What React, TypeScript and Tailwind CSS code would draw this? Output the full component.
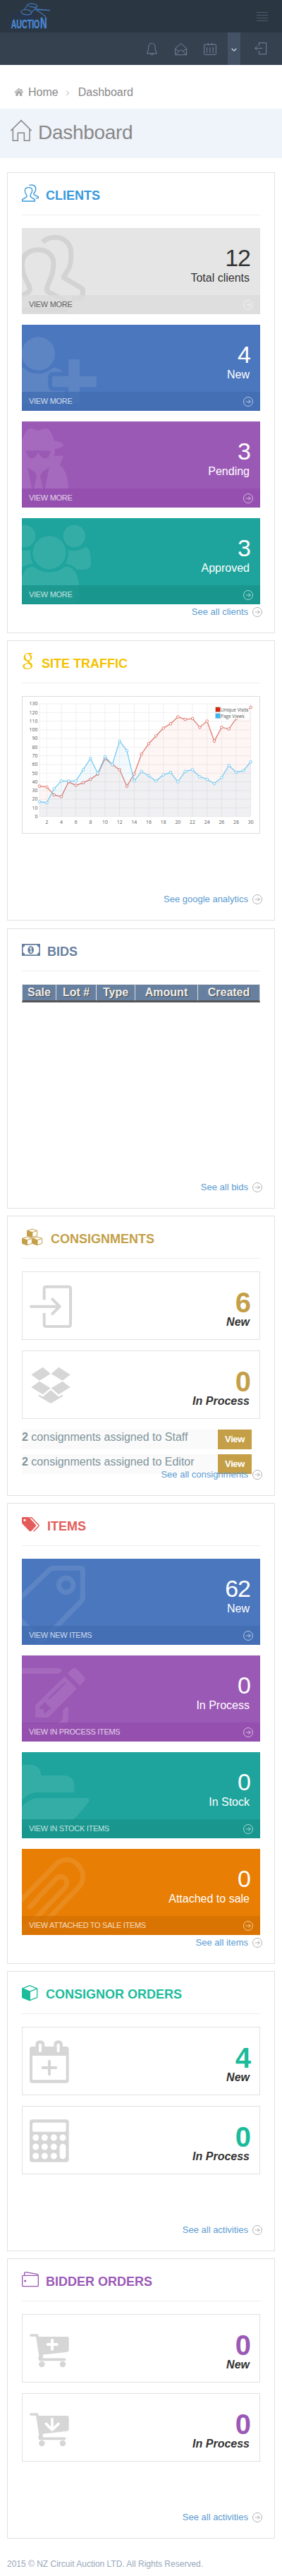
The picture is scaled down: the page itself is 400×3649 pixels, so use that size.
import React from "react";

type IconProps = { box: string; className?: string; children: React.ReactNode };

function Icon({ box, className = "", children }: IconProps) {
  return (
    <svg viewBox={box} className={`shrink-0 ${className}`} fill="none" stroke="currentColor" aria-hidden="true">
      {children}
    </svg>
  );
}

function CircleArrow({ className = "" }: { className?: string }) {
  return (
    <Icon box="0 0 42 42" className={`size-3.5 ${className}`}>
      <circle cx="21" cy="21" r="19.5" strokeWidth="2.6" />
      <path d="M11 21H31M22 13l9 8-9 8" strokeWidth="2.6" />
    </Icon>
  );
}

/* ---------- large tile artwork ---------- */

const art: Record<string, { box: string; node: React.ReactNode }> = {
  clients: {
    box: "93 39 339 366",
    node: (
      <g strokeWidth="21" strokeLinejoin="round">
        <path d="M95 200V185C95 155 125 131 163 131S228 155 228 190C228 250 199 275 199 300Q199 307 206 311L272 345Q280 350 280 358V380Q280 388 272 388H60V350L120 311Q127 307 127 300C127 275 95 250 95 200" />
        <path d="M181 98Q203 79 235 79C275 79 302 110 302 140V165C302 220 271 235 271 250L345 293Q352 297 352 304V328Q352 337 343 337H305" />
      </g>
    ),
  },
  userPlus: {
    box: "93 450 339 366",
    node: (
      <g fill="currentColor" stroke="none">
        <circle cx="163" cy="573" r="71" />
        <path d="M93 632Q100 633 107 639C122 652 140 658 163 658S205 650 221 636Q228 632 236 632Q255 636 268 650H230Q204 650 204 676V706Q204 732 230 732H275V780Q270 786 260 786H93Z" />
        <path d="M300 597H331Q339 597 339 605V668H403Q411 668 411 676V707Q411 715 403 715H339V779Q339 787 331 787H300Q292 787 292 779V715H230Q222 715 222 707V676Q222 668 230 668H292V605Q292 597 300 597Z" />
      </g>
    ),
  },
  secret: {
    box: "93 21 339 366",
    node: (
      <path
        fill="currentColor"
        stroke="none"
        fillRule="evenodd"
        d="M93 105C105 72 113 51 130 51C145 51 150 59 163 59S180 51 195 51C213 51 222 75 230 102C250 105 269 112 269 121S250 137 233 138C234 150 232 160 229 167H270L254 208C280 225 291 265 291 310V356H93V160H96L93 152ZM110 146Q163 142 216 146V152L212 156C210 170 205 178 192 178C178 178 172 170 167 159Q163 153 159 159C154 170 148 178 136 178C122 178 116 170 114 156L110 152ZM116 214Q131 228 143 231L157 251L140 328ZM210 214Q195 228 184 231L170 251L187 328Z"
      />
    ),
  },
  users: {
    box: "93 432 339 366",
    node: (
      <g fill="currentColor" stroke="none">
        <circle cx="104" cy="508" r="47" />
        <circle cx="316" cy="508" r="47" />
        <circle cx="210" cy="578" r="70.5" />
        <path d="M291 567Q330 578 361 556C381 552 387 585 387 625Q387 650 358 650H326Q312 630 280 626Q293 600 291 567Z" />
        <path d="M129 567Q112 571 93 569V642Q110 628 140 626Q127 600 129 567Z" />
        <path d="M93 690C98 662 112 636 142 638Q172 662 210 662T278 638C325 636 338 690 338 750Q338 792 300 792H120Q102 792 93 782Z" />
      </g>
    ),
  },
  tag: {
    box: "93 264 339 366",
    node: (
      <g strokeWidth="21" strokeLinejoin="round">
        <path d="M75 442L213 309Q219 304 226 304H342Q352 304 352 314V432Q352 438 347 443L185 609Q178 614 171 609L75 513" />
        <circle cx="281" cy="376" r="30.5" />
      </g>
    ),
  },
  edit: {
    box: "93 675 339 366",
    node: (
      <g fill="currentColor" stroke="none">
        <path d="M93 728H238Q258 729 265 739L250 752H93Z" />
        <path
          fillRule="evenodd"
          d="M275 764L327 816L205 939H151V886ZM190 873L168 894V904H186V920L190 922L218 900ZM274 789L206 855Q204 862 211 861L279 795Q279 789 274 789Z"
        />
        <path d="M288 751L306 733Q316 725 326 733L356 763Q366 773 358 784L340 803Z" />
        <path d="M268 909Q275 895 291 893V930Q291 988 235 988H93V965H235Q268 960 268 925Z" />
      </g>
    ),
  },
  folder: {
    box: "93 66 339 366",
    node: (
      <g fill="currentColor" stroke="none">
        <path d="M93 120H134Q174 124 174 165H272Q316 167 316 210V237H160Q122 237 93 270Z" />
        <path d="M93 298Q125 261 165 261H369Q382 263 378 275Q360 303 315 350Q290 377 250 377H93Z" />
      </g>
    ),
  },
  clip: {
    box: "93 477 339 366",
    node: (
      <g strokeWidth="21" strokeLinecap="round">
        <path d="M70 715L235 546C262 516 303 515 330 544C360 572 360 612 333 642L195 785" />
        <path d="M127 724L235 607C250 590 270 592 280 606C288 620 284 634 275 643L130 795Q112 815 85 821" />
      </g>
    ),
  },
};

type Tile = { art: string; value: string; label: string; more: string; tone: string; bar: string };

const clientTiles: Tile[] = [
  { art: "clients", value: "12", label: "Total clients", more: "View more", tone: "bg-[#e5e5e5] text-[#333333]", bar: "bg-[#dcdcdc]/80" },
  { art: "userPlus", value: "4", label: "New", more: "View more", tone: "bg-[#4b77be] text-white", bar: "bg-[#426db3]/80" },
  { art: "secret", value: "3", label: "Pending", more: "View more", tone: "bg-[#9b59b6] text-white", bar: "bg-[#934cae]/80" },
  { art: "users", value: "3", label: "Approved", more: "View more", tone: "bg-[#1ea49d] text-white", bar: "bg-[#18938c]/80" },
];

const itemTiles: Tile[] = [
  { art: "tag", value: "62", label: "New", more: "View new items", tone: "bg-[#4b77be] text-white", bar: "bg-[#426db3]/80" },
  { art: "edit", value: "0", label: "In Process", more: "View in process items", tone: "bg-[#9b59b6] text-white", bar: "bg-[#934cae]/80" },
  { art: "folder", value: "0", label: "In Stock", more: "View in stock items", tone: "bg-[#1ea49d] text-white", bar: "bg-[#18938c]/80" },
  { art: "clip", value: "0", label: "Attached to sale", more: "View attached to sale items", tone: "bg-[#e87e04] text-white", bar: "bg-[#d57203]/80" },
];

function StatTile({ tile }: { tile: Tile }) {
  const { box, node } = art[tile.art];
  const light = tile.art === "clients";
  return (
    <a className={`relative flex h-[122px] flex-col overflow-hidden ${tile.tone}`}>
      <Icon
        box={box}
        className={`absolute top-0 left-0 h-[122px] w-[113px] ${light ? "text-[#d3d3d3]" : "text-white opacity-10"}`}
      >
        {node}
      </Icon>
      <div className="flex h-[95px] flex-col items-end pt-[25px] pr-[15px]">
        <div className="-mr-px text-[34px] leading-[34px] tracking-[-1px]">{tile.value}</div>
        <div className="mt-1 text-base leading-4">{tile.label}</div>
      </div>
      <div className={`relative flex h-[27px] items-center justify-between px-2.5 ${tile.bar}`}>
        <span className={`text-[11px] tracking-[-0.3px] uppercase ${light ? "text-[#5f5f5f]" : "text-white/75"}`}>{tile.more}</span>
        <CircleArrow className="text-white/70" />
      </div>
    </a>
  );
}

/* ---------- outlined stat boxes ---------- */

const cart = (
  <>
    <path d="M132 354H158L172 445Q166 449 170 457H275" strokeWidth="11" strokeLinecap="round" strokeLinejoin="round" />
    <path d="M156 360H287Q293 360 293 367V418Q293 424 286 425L180 437L172 442Z" fill="currentColor" stroke="none" />
    <path d="M177 430V457" strokeWidth="11" />
    <circle cx="178" cy="477" r="13" fill="currentColor" stroke="none" />
    <circle cx="267" cy="477" r="13" fill="currentColor" stroke="none" />
  </>
);

const boxArt: Record<string, { box: string; node: React.ReactNode }> = {
  login: {
    box: "96 306 240 285",
    node: (
      <g strokeWidth="12">
        <path d="M188 424V376Q188 368 196 368H292Q300 368 300 376V529Q300 537 292 537H196Q188 537 188 529V480" />
        <path d="M132 452H252M223 421L254 452L223 483" strokeLinecap="round" strokeLinejoin="round" />
      </g>
    ),
  },
  dropbox: {
    box: "96 642 240 285",
    node: (
      <path
        fill="currentColor"
        stroke="none"
        d="M182 710L215 738L168 767L133 742ZM250 710L299 742L266 767L218 738ZM168 770L215 799L182 826L133 795ZM266 770L299 795L250 826L218 799ZM166 826L182 836L216 807L250 836L266 826V835L216 864L166 835Z"
      />
    ),
  },
  calendar: {
    box: "96 276 240 285",
    node: (
      <g fill="currentColor" stroke="none">
        <path
          fillRule="evenodd"
          d="M138 357H151V350Q151 331 170.500 331T190 350V357H229V350Q229 331 248 331T267 350V357H281Q293 357 293 369V500Q293 512 281 512H138Q126 512 126 500V369Q126 357 138 357ZM138 396V499H281V396ZM165 349V377Q165 381 171 381T177 377V349Q177 345 171 345T165 349ZM242 349V377Q242 381 248 381T254 377V349Q254 345 248 345T242 349Z"
        />
        <path d="M182 447H238M210 420V475" stroke="currentColor" strokeWidth="12" strokeLinecap="round" />
      </g>
    ),
  },
  calculator: {
    box: "96 612 240 285",
    node: (
      <g stroke="none">
        <rect x="126" y="667" width="167" height="181" rx="12" fill="currentColor" />
        <rect x="138" y="680" width="143" height="39" rx="6" fill="#fff" />
        <g fill="#fff">
          {[152, 190, 229].map((x) => [744, 783, 822].map((y) => <circle key={`${x}-${y}`} cx={x} cy={y} r="13.500" />))}
          <circle cx="267" cy="744" r="13.500" />
          <rect x="254" y="770" width="26" height="65" rx="13" />
        </g>
      </g>
    ),
  },
  cartPlus: {
    box: "96 267 240 285",
    node: (
      <>
        {cart}
        <path d="M203 393H242M222 374V413" stroke="#fff" strokeWidth="12" strokeLinecap="round" />
      </>
    ),
  },
  cartDown: {
    box: "96 267 240 285",
    node: (
      <>
        {cart}
        <path d="M222 374V418M196 394L222 420L249 394" stroke="#fff" strokeWidth="11" strokeLinecap="round" strokeLinejoin="round" />
      </>
    ),
  },
};

function StatBox({ icon, value, label, tone }: { icon: string; value: string; label: string; tone: string }) {
  const { box, node } = boxArt[icon];
  return (
    <div className="flex h-[97px] justify-between border border-[#e1e1e1]">
      <Icon box={box} className="h-[95px] w-20 text-[#d6d6d6]">
        {node}
      </Icon>
      <div className="flex flex-col items-end pt-[23px] pr-3.5 font-bold">
        <div className={`-mr-px text-[40px] leading-10 tracking-[-1px] ${tone}`}>{value}</div>
        <div className="text-base leading-4 text-[#333333] italic">{label}</div>
      </div>
    </div>
  );
}

/* ---------- card shell ---------- */

type CardProps = {
  title: string;
  tone: string;
  icon: React.ReactNode;
  iconBox: string;
  iconWidth: string;
  size: string;
  link: string;
  children: React.ReactNode;
};

function Card({ title, tone, icon, iconBox, iconWidth, size, link, children }: CardProps) {
  return (
    <section className={`flex flex-col border border-[#e1e1e1] px-5 ${size}`}>
      <header className={`flex h-[60px] shrink-0 border-b border-[#eeeeee] ${tone}`}>
        <Icon box={iconBox} className={`h-[59px] ${iconWidth}`}>
          {icon}
        </Icon>
        <h2 className="pt-[23px] text-lg leading-[18px] font-bold whitespace-nowrap uppercase">{title}</h2>
      </header>
      <div className="mt-[18px] flex flex-col gap-[15px]">{children}</div>
      <a className="relative mt-auto -mr-[3px] mb-[21px] flex h-4 shrink-0 items-center justify-end gap-1.5 text-[13px] text-[#5b9bd1]">
        {link}
        <CircleArrow className="text-[#a6a6a6]" />
      </a>
    </section>
  );
}

/* ---------- traffic chart ---------- */

const visits = [35, 34, 25, 23, 40, 36, 39, 43, 49, 67, 60, 54, 35, 49, 72, 84, 93, 102, 107, 115, 112, 113, 103, 110, 87, 103, 101, 113, 119, 126];
const views = [17, 16, 32, 41, 41, 41, 54, 67, 50, 69, 60, 87, 76, 41, 52, 47, 41, 48, 51, 40, 52, 54, 46, 43, 38, 45, 59, 51, 53, 63];
const px = (day: number) => 168 + (day - 1) * 31;
const py = (v: number) => 770 - v * 3.685;
const line = (data: number[]) => data.map((v, i) => `${px(i + 1)},${py(v)}`).join(" ");

function Series({ data, stroke, fill }: { data: number[]; stroke: string; fill: string }) {
  return (
    <g>
      <polygon points={`168,770 ${line(data)} 1067,770`} fill={fill} stroke="none" />
      <polyline points={line(data)} fill="none" stroke={stroke} strokeWidth="4" />
      {data.map((v, i) => (
        <circle key={i} cx={px(i + 1)} cy={py(v)} r="5.500" fill="#fff" stroke={stroke} strokeWidth="3" />
      ))}
    </g>
  );
}

function TrafficChart() {
  const ticks = Array.from({ length: 14 }, (_, i) => i * 10);
  const days = Array.from({ length: 15 }, (_, i) => (i + 1) * 2);
  return (
    <div className="h-[195px] border border-[#dddddd]">
      <svg viewBox="96 261 1008 579" className="h-[193px] w-[336px]" fontFamily="'Open Sans', 'Noto Sans', sans-serif" fontSize="20.5">
        <g stroke="#f0f0f0" strokeWidth="3">
          {ticks.map((t) => (
            <line key={t} x1="168" x2="1067" y1={py(t)} y2={py(t)} />
          ))}
          {days.map((d) => (
            <line key={d} x1={px(d)} x2={px(d)} y1="291" y2="772" />
          ))}
          <line x1="168" x2="168" y1="291" y2="772" />
        </g>
        <g fill="#555">
          {ticks.map((t) => (
            <text key={t} x="160" y={py(t) + 7} textAnchor="end">
              {t}
            </text>
          ))}
          {days.map((d) => (
            <text key={d} x={px(d)} y="800" textAnchor="middle">
              {d}
            </text>
          ))}
        </g>
        <Series data={visits} stroke="#e07b70" fill="rgba(215,70,50,0.05)" />
        <Series data={views} stroke="#7acbf0" fill="rgba(70,175,230,0.07)" />
        <rect x="915" y="303" width="145" height="53" fill="#fff" opacity="0.85" />
        <rect x="917" y="305" width="21" height="21" fill="#d12610" stroke="#ccc" strokeWidth="2" />
        <rect x="917" y="332" width="21" height="21" fill="#37b7f3" stroke="#ccc" strokeWidth="2" />
        <g fill="#555">
          <text x="939" y="323" textLength="118" lengthAdjust="spacingAndGlyphs">Unique Visits</text>
          <text x="939" y="350" textLength="101" lengthAdjust="spacingAndGlyphs">Page Views</text>
        </g>
      </svg>
    </div>
  );
}

/* A small isometric box: solid left face, open top and right faces. */
function Cube({ x, y, w, h, sw }: { x: number; y: number; w: number; h: number; sw: number }) {
  const m = x + w / 2;
  const a = h * 0.2;
  const pts = `${m},${y} ${x + w},${y + a} ${x + w},${y + h - a} ${m},${y + h} ${x},${y + h - a} ${x},${y + a}`;
  return (
    <g strokeWidth={sw} strokeLinejoin="round">
      <polygon points={pts} fill="#fff" />
      <path d={`M${x} ${y + a}L${m} ${y + 2 * a}L${x + w} ${y + a}M${m} ${y + 2 * a}V${y + h}`} />
      <polygon points={`${x},${y + a} ${m},${y + 2 * a} ${m},${y + h} ${x},${y + h - a}`} fill="currentColor" />
    </g>
  );
}

function TopBar() {
  return (
    <>
      <div className="flex h-[46px] items-start justify-between bg-[#2b3643] pr-5 pl-[15px]">
        <svg viewBox="45 0 180 138" className="h-[46px] w-[60px] overflow-visible" fill="none" stroke="#4377b5" strokeWidth="3.5" strokeLinejoin="round">
          <text x="50" y="81" fontSize="36" fontStyle="italic" fontFamily="'Liberation Serif', serif" fill="#1f3565" stroke="none" textLength="100" lengthAdjust="spacingAndGlyphs">
            Circuit
          </text>
          <path d="M116 21L104 42C96 42 90 46 90 51C91 59 108 64 122 62C130 61 134 58 134 53L148 38" />
          <path d="M104 42C113 38 130 43 134 53" />
          <path d="M116 21C118 15 133 14 145 17C155 19 161 24 157 29C153 33 142 31 134 29S117 26 116 21" />
          <path d="M157 29L148 38M148 38L212 44L150 41M148 38C165 52 180 56 195 72" />
          <g fill="#4a86d0" stroke="#4a86d0" strokeWidth="1.5" fontWeight="bold" fontFamily="'Liberation Sans Narrow', 'Liberation Sans', sans-serif">
            <text x="47" y="120" fontSize="50" textLength="122" lengthAdjust="spacingAndGlyphs">AUCTIO</text>
            <text x="171" y="120" fontSize="67" textLength="29" lengthAdjust="spacingAndGlyphs">N</text>
          </g>
        </svg>
        <div className="mt-[17px] flex w-4 flex-col gap-[3px]">
          <span className="h-px bg-[#4e5d6f]" />
          <span className="h-px bg-[#4e5d6f]" />
          <span className="h-px bg-[#4e5d6f]" />
          <span className="h-px bg-[#4e5d6f]" />
        </div>
      </div>
      <nav className="flex h-[46px] items-center justify-end bg-[#364150] pr-5 text-[#74829a]">
        <Icon box="618 183 60 60" className="mr-[21px] size-5">
          <path d="M646 190C635 190 632 199 632 208C632 219 629 226 625 233H668C663 226 660 219 660 208C660 199 657 190 646 190ZM639 235Q641 239 646 239T654 235" strokeWidth="3" strokeLinejoin="round" />
        </Icon>
        <Icon box="741 183 60 60" className="mr-[21px] size-5">
          <path d="M770 191L746 212V239H794V212ZM746 214L762 224M794 214L777 224M747 238L762 224L770 217L778 224L793 238" strokeWidth="3" strokeLinejoin="round" />
        </Icon>
        <Icon box="864 183 60 60" className="mr-[15px] size-5">
          <rect x="869" y="195" width="50" height="43" rx="2" strokeWidth="3" />
          <path d="M886 189V199M902 189V199" strokeWidth="3" />
          <path d="M878 211H883M891 211H896M904 211H909M878 219H883M891 219H896M904 219H909M878 227H883M891 227H896M904 227H909" strokeWidth="5" />
        </Icon>
        <span className="mr-[19px] flex h-[46px] w-[18px] items-center justify-center bg-[#435265] pt-[3px] text-[#c6cfda]">
          <Icon box="0 0 24 15" className="h-[5px] w-2">
            <path d="M2 2L12 12L22 2" strokeWidth="4" />
          </Icon>
        </span>
        <Icon box="1080 183 60 60" className="size-5">
          <path d="M1102 201V188H1133V236H1102V222M1117 211H1086M1094 203L1085 211L1094 220" strokeWidth="3" />
        </Icon>
      </nav>
    </>
  );
}

const columns = [
  ["Sale", "w-12"],
  ["Lot #", "w-[57px]"],
  ["Type", "w-[55px]"],
  ["Amount", "w-[89px]"],
  ["Created", "w-[87px]"],
];

export default function App() {
  return (
    <div className="h-[3649px] w-[400px] overflow-hidden bg-white font-['Liberation_Sans',Arial,sans-serif] text-[#333333]">
      <TopBar />

      <div className="flex h-[62px] items-center pt-[15px] pl-5 text-base text-[#888888]">
        <Icon box="60 372 42 42" className="mr-[6px] size-3.5 text-[#aaaaaa]">
          <path d="M62 393L80 377L99 393" strokeWidth="4" />
          <path d="M67 394L80 383L94 394V408H84V398H77V408H67ZM89 378H94V386L89 382Z" fill="currentColor" stroke="none" />
        </Icon>
        <span>Home</span>
        <Icon box="0 0 18 24" className="mt-0.5 mr-3 ml-[10px] h-2 w-[6px] text-[#aaaaaa]">
          <path d="M4 2L14 12L4 22" strokeWidth="3" />
        </Icon>
        <span>Dashboard</span>
      </div>

      <div className="flex h-[70px] bg-[#eff3fa] pl-[15px] text-[#888888]">
        <Icon box="45 462 90 210" className="h-[70px] w-[30px]">
          <path d="M46 556L90 512L134 556M55 549V598H76V565H103V598H126V549" strokeWidth="4.500" />
        </Icon>
        <h1 className="pt-5 pl-[9px] text-[28px] leading-[28px] tracking-[-0.3px]">Dashboard</h1>
      </div>

      <main className="flex flex-col gap-2.5 px-2.5 pt-5">
        <Card
          title="Clients"
          tone="text-[#3598dc]"
          size="h-[653px]"
          link="See all clients"
          iconBox="93 735 102 177"
          iconWidth="w-[34px]"
          icon={
            <g strokeWidth="4" strokeLinejoin="round">
              <path d="M95 855H148V848L132 838Q126 833 130 827C135 821 137 815 137 808C137 800 130 797 121 797S106 800 106 810C106 818 108 822 112 827Q117 833 111 838L95 848Z" />
              <path d="M124 788C132 784 150 785 152 799C153 808 150 815 145 820Q141 826 147 829L163 836V842H152" />
            </g>
          }
        >
          {clientTiles.map((t) => (
            <StatTile key={t.art} tile={t} />
          ))}
        </Card>

        <Card
          title="Site Traffic"
          tone="text-[#f3c200]"
          size="h-[397px]"
          link="See google analytics"
          iconBox="93 24 84 177"
          iconWidth="w-7"
          icon={
            <g>
              <path
                fill="currentColor"
                stroke="none"
                fillRule="evenodd"
                d="M118 75H140L133 80H127C134 84 136 89 136 94C136 101 132 104 128 107C124 110 124 112 128 115C134 119 138 123 138 129C138 138 129 144 116 144C104 144 97 139 97 132C97 124 106 119 119 118C116 115 116 112 117 109C107 110 101 103 101 95C101 84 109 75 118 75ZM116 78C110 78 108 82 108 88C108 97 113 106 120 106C127 106 129 102 129 97C129 88 124 78 116 78ZM121 121C110 121 104 125 104 131C104 137 110 141 119 141C127 141 131 137 131 132C131 127 127 124 121 121Z"
              />
            </g>
          }
        >
          <TrafficChart />
        </Card>

        <Card
          title="Bids"
          tone="text-[#67809f]"
          size="mt-px h-[397px]"
          link="See all bids"
          iconBox="93 48 108 177"
          iconWidth="w-9"
          icon={
            <g fill="currentColor" stroke="none">
              <path fillRule="evenodd" d="M93 111H171V162H93ZM106 116Q106 123 98 125V148Q106 150 106 157H158Q158 150 166 148V125Q158 123 158 116Z" />
              <ellipse cx="131" cy="137" rx="13" ry="17" />
              <path d="M126 130L132 127V145M126 146H138" stroke="#fff" strokeWidth="4" />
            </g>
          }
        >
          <div className="flex border-x border-t border-b-[3px] border-[#dddddd] border-b-[#555555] bg-[#67809f]">
            {columns.map(([name, width], i) => (
              <div
                key={name}
                className={`h-[22px] shrink-0 text-center leading-[22px] font-bold text-[#eeeeee] [text-shadow:1px_1px_1px_#444] ${width} ${i < 4 ? "border-r border-[#dddddd]" : ""}`}
              >
                {name}
              </div>
            ))}
          </div>
        </Card>

        <Card
          title="Consignments"
          tone="text-[#c49f47]"
          size="h-[397px]"
          link="See all consignments"
          iconBox="93 69 123 177"
          iconWidth="w-[41px]"
          icon={
            <>
              <Cube x={116} y={123} w={42} h={35} sw={3} />
              <Cube x={95} y={156} w={41} h={35} sw={3} />
              <Cube x={138} y={156} w={41} h={35} sw={3} />
            </>
          }
        >
          <StatBox icon="login" value="6" label="New" tone="text-[#c49f47]" />
          <StatBox icon="dropbox" value="0" label="In Process" tone="text-[#c49f47]" />
          <div className="flex h-14 w-[326px] flex-col gap-[7px] text-[#80949a]">
            {["Staff", "Editor"].map((who) => (
              <div key={who} className="flex h-7 shrink-0 justify-between bg-[#fafafa]">
                <span className="leading-[21px]">
                  <b>2</b> consignments assigned to {who}
                </span>
                <span className="w-12 bg-[#c49f47] text-center text-[13px] leading-[27px] font-bold tracking-[-0.4px] text-white">View</span>
              </div>
            ))}
          </div>
        </Card>

        <Card
          title="Items"
          tone="text-[#e35b5a]"
          size="h-[653px]"
          link="See all items"
          iconBox="93 30 108 177"
          iconWidth="w-9"
          icon={
            <>
              <path fill="currentColor" stroke="none" fillRule="evenodd" d="M97 87H118Q122 87 126 91L152 119Q156 123 152 127L133 146Q129 150 125 146L97 118Q93 114 93 109V91Q93 87 97 87ZM105 95A5 5 0 1 0 105 105A5 5 0 1 0 105 95Z" />
              <path d="M125 89H130Q134 89 137 92L164 120Q167 123 164 126L143 148" strokeWidth="4.500" />
            </>
          }
        >
          {itemTiles.map((t) => (
            <StatTile key={t.art} tile={t} />
          ))}
        </Card>

        <Card
          title="Consignor orders"
          tone="text-[#1bbc9b]"
          size="h-[397px]"
          link="See all activities"
          iconBox="93 39 102 177"
          iconWidth="w-[34px]"
          icon={<Cube x={95} y={98} w={63} h={63} sw={4} />}
        >
          <StatBox icon="calendar" value="4" label="New" tone="text-[#1bbc9b]" />
          <StatBox icon="calculator" value="0" label="In Process" tone="text-[#1bbc9b]" />
        </Card>

        <Card
          title="Bidder orders"
          tone="text-[#9b59b6]"
          size="h-[397px]"
          link="See all activities"
          iconBox="93 30 102 177"
          iconWidth="w-[34px]"
          icon={
            <>
              <rect x="95" y="100" width="68" height="46" rx="3" strokeWidth="4" />
              <path d="M104 99V90Q105 85 110 86L158 94Q163 95 163 101" strokeWidth="4" />
              <circle cx="107" cy="123" r="4.500" fill="currentColor" stroke="none" />
            </>
          }
        >
          <StatBox icon="cartPlus" value="0" label="New" tone="text-[#9b59b6]" />
          <StatBox icon="cartDown" value="0" label="In Process" tone="text-[#9b59b6]" />
        </Card>
      </main>

      <footer className="px-2.5 pt-[26px] text-xs leading-5 text-[#98a6ba]">
        2015 © NZ Circuit Auction LTD. All Rights Reserved.
      </footer>
    </div>
  );
}
